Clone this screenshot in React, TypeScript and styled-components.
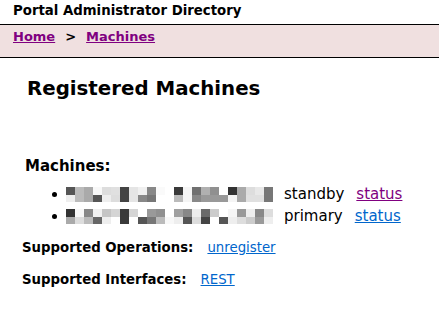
import styled, { createGlobalStyle } from "styled-components";

const GlobalStyle = createGlobalStyle`
	body {
		margin: 0;
		background: #fff;
		font-family: "DejaVu Sans", Verdana, sans-serif;
		color: #000;
	}
`;

/* PAGE PARTS */

const Title = styled.div`
	font-weight: 700;
	font-size: 13.3px;
	line-height: 16px;
	padding: 3px 13px 5px;
`;

const Crumbs = styled.nav`
	display: flex;
	align-items: flex-start;
	gap: 10px;
	padding: 4px 13px 0;
	box-sizing: border-box;
	height: 34px;
	background: #f0e0e0;
	border-top: 1px solid #000;
	border-bottom: 1px solid #000;
	font-weight: 700;
	font-size: 13px;
	line-height: 16px;
`;

const Link = styled.a<{ $visited?: boolean }>`
	color: ${(props) => (props.$visited ? "#800080" : "#0066cc")};
	text-decoration: underline;
	cursor: pointer;
`;

const Main = styled.main`
	padding: 0 22px;
`;

const Heading = styled.h1`
	margin: 18px 0 0 5px;
	font-size: 19.8px;
	line-height: 25px;
	font-weight: 700;
`;

const SubHeading = styled.h2`
	margin: 56px 0 0 3px;
	font-size: 15px;
	line-height: 18px;
	font-weight: 700;
`;

const List = styled.ul`
	margin: 8px 0 0;
	padding: 0 0 0 44px;
	font-size: 15px;
	line-height: 22px;
`;

const Item = styled.li`
	display: flex;
	align-items: center;
	position: relative;

	&::before {
		content: "";
		position: absolute;
		left: -14px;
		top: 9px;
		width: 5px;
		height: 5px;
		border-radius: 50%;
		background: #000;
	}
`;

const Role = styled.span`
	margin: 0 12px 0 11px;
`;

const Field = styled.div<{ $top: number }>`
	display: flex;
	gap: 14px;
	margin-top: ${(props) => props.$top}px;
	font-size: 13.3px;
	line-height: 16px;
`;

const Label = styled.span`
	font-weight: 700;
`;

/* BLURRED NAME */

const rows: string[][] = [
	[
		"555,bbb,aaa,f8f8f8,ddd,e0e0e0,444,e5e5e5,f0f0f0,888,fafafa,fff,3a3a3a,f5f5f5,707070,b0b0b0,909090,fff,333,aaa,ddd,e8e8e8,777",
		"eee,bbb,aaa,555,eee,ddd,444,e5e5e5,888,777,fff,fff,bbb,f5f5f5,888,999,999,999,f5f5f5,aaa,e0e0e0,e0e0e0,777",
	],
	[
		"333,f8f8f8,888,f0f0f0,c5c5c5,d5d5d5,3a3a3a,d5d5d5,fff,999,909090,fff,a0a0a0,888,eee,6a6a6a,ccc,fff,f5f5f5,999,eee,888,ddd",
		"aaa,ddd,bbb,666,eee,fff,3a3a3a,fff,555,777,bbb,f8f8f8,eee,555,ddd,444,fff,555,eee,ddd,ccc,999,eee",
	],
].map((r) => r.map((line) => line.split(",")).flat());

const COLS = 23;

const Blur = ({ cells }: { cells: string[] }) => (
	<svg width={COLS * 9} height={15} viewBox={`0 0 ${COLS * 9} 15`} shapeRendering="crispEdges">
		{cells.map((c, i) => {
			const row = i < COLS ? 0 : 1;
			const col = i % COLS;
			return <rect key={i} x={col * 9} y={row * 8} width={9} height={row ? 7 : 8} fill={`#${c}`} />;
		})}
	</svg>
);

const machines = [
	{ cells: rows[0], role: "standby", visited: true },
	{ cells: rows[1], role: "primary", visited: false },
];

export default function App() {
	return (
		<>
			<GlobalStyle />
			<Title>Portal Administrator Directory</Title>
			<Crumbs>
				<Link $visited>Home</Link>
				<span>&gt;</span>
				<Link $visited>Machines</Link>
			</Crumbs>
			<Main>
				<Heading>Registered Machines</Heading>
				<SubHeading>Machines:</SubHeading>
				<List>
					{machines.map((m) => (
						<Item key={m.role}>
							<Blur cells={m.cells} />
							<Role>{m.role}</Role>
							<Link $visited={m.visited}>status</Link>
						</Item>
					))}
				</List>
				<Field $top={13}>
					<Label>Supported Operations:</Label>
					<Link>unregister</Link>
				</Field>
				<Field $top={16}>
					<Label>Supported Interfaces:</Label>
					<Link>REST</Link>
				</Field>
			</Main>
		</>
	);
}
